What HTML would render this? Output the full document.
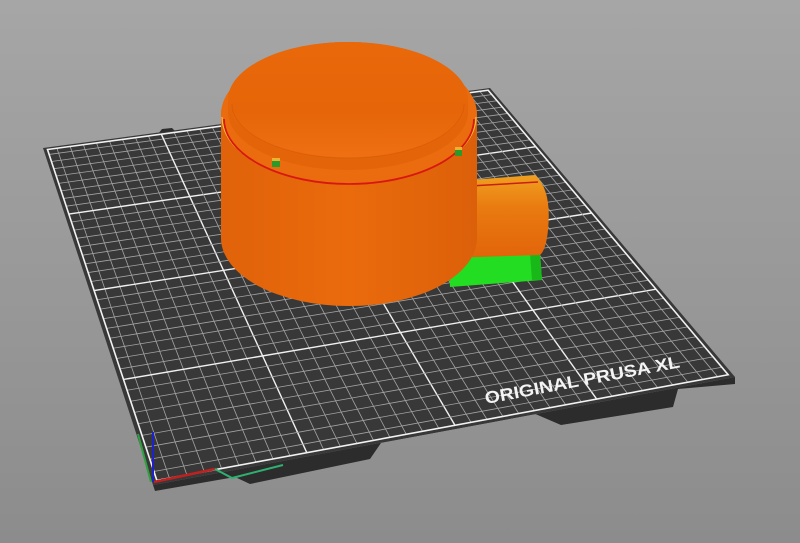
<!DOCTYPE html>
<html><head><meta charset="utf-8"><style>
html,body{margin:0;padding:0;width:800px;height:543px;overflow:hidden}
body{background:linear-gradient(#a6a6a6,#8c8c8c)}
svg{display:block}
</style></head><body>
<svg id="s" width="800" height="543" viewBox="0 0 800 543">
<defs>
<linearGradient id="cyl" x1="0" x2="1" y1="0" y2="0">
<stop offset="0" stop-color="#e0620a"/><stop offset="0.5" stop-color="#ea6b0c"/><stop offset="1" stop-color="#dc600a"/>
</linearGradient>
<linearGradient id="box" x1="0" x2="0" y1="0" y2="1">
<stop offset="0" stop-color="#f0a020"/><stop offset="0.4" stop-color="#e97a10"/><stop offset="1" stop-color="#e2640a"/>
</linearGradient>
<linearGradient id="top" x1="0" x2="0" y1="0" y2="1">
<stop offset="0" stop-color="#e8680a"/><stop offset="0.6" stop-color="#e56508"/><stop offset="1" stop-color="#ee7012"/>
</linearGradient>
</defs>
<polygon points="153,485 155,491 235,477 250,484 370,459 383,440 533,413 561,425 673,407 678,389 735,384 735,377" fill="#2c2c2c"/>
<polygon points="158,134 162,129 172,128 176,132" fill="#2c2c2c"/>
<polygon points="43,148 490,88 735,377 153,485" fill="#383838"/>
<g id="grid"></g>
<polygon id="border" fill="none" stroke="#f2f2f2" stroke-width="1.6"/>
<text x="0" y="0" transform="translate(486,404) rotate(-10.7)" fill="#f4f4f4" font-family="Liberation Sans, sans-serif" font-weight="bold" font-size="17" textLength="198" lengthAdjust="spacingAndGlyphs">ORIGINAL PRUSA XL</text>
<line x1="153" y1="482" x2="153" y2="432" stroke="#1e22c8" stroke-width="2"/>
<line x1="151" y1="482" x2="138" y2="434" stroke="#2fa040" stroke-width="2"/>
<line x1="154" y1="482" x2="215" y2="469" stroke="#c02020" stroke-width="2.5"/>
<polyline points="215,469 232,478 283,465" fill="none" stroke="#2fb070" stroke-width="2"/>
<!-- side box -->
<polygon points="448,257 540,253 542,280 450,287" fill="#22dd22"/>
<polygon points="530,254 540,253 542,280 532,280" fill="#18b818"/>
<path d="M440,200 Q445,182 470,180 L535,175 Q552,190 548,230 Q546,250 540,255 L448,258 Q438,240 440,200 Z" fill="url(#box)"/>
<line x1="470" y1="186" x2="538" y2="182" stroke="#c82010" stroke-width="1.5"/>
<!-- cylinder base -->
<path d="M221,115 L221,238 A128,68 0 0 0 477,238 L477,115 A128,68 0 0 0 221,115 Z" fill="url(#cyl)"/>
<ellipse cx="349" cy="115" rx="128" ry="68" fill="#ea6c0e"/>
<path d="M222,117 A127,67 0 0 0 476,117" fill="none" stroke="#f6c23a" stroke-width="1.2"/>
<path d="M224,119 A125,65 0 0 0 474,119" fill="none" stroke="#d81810" stroke-width="1.8"/>
<!-- upper cylinder -->
<path d="M228,100 L228,112 A120,58 0 0 0 468,112 L468,100 A120,58 0 0 0 228,100 Z" fill="#e4640a"/>
<ellipse cx="348" cy="100" rx="120" ry="58" fill="url(#top)"/>
<path d="M232,104 A116,54 0 0 0 464,104" fill="none" stroke="#d25a06" stroke-width="1" opacity="0.6"/>
<rect x="272" y="160" width="8" height="7" fill="#2a9a2a"/>
<rect x="272" y="158" width="8" height="3" fill="#f0b030"/>
<rect x="455" y="150" width="7" height="6" fill="#2a9a2a"/>
<rect x="455" y="147" width="7" height="3" fill="#f0b030"/>
</svg>
<script>
var X=[43,490,735,153],Y=[148,88,377,485];
var dx1=X[1]-X[2],dx2=X[3]-X[2],dx3=X[0]-X[1]+X[2]-X[3];
var dy1=Y[1]-Y[2],dy2=Y[3]-Y[2],dy3=Y[0]-Y[1]+Y[2]-Y[3];
var den=dx1*dy2-dx2*dy1;
var G=(dx3*dy2-dx2*dy3)/den,H=(dx1*dy3-dx3*dy1)/den;
var A=X[1]-X[0]+G*X[1],B=X[3]-X[0]+H*X[3],C=X[0],D=Y[1]-Y[0]+G*Y[1],E=Y[3]-Y[0]+H*Y[3],F=Y[0];
function P(u,v){var w=G*u+H*v+1;return [(A*u+B*v+C)/w,(D*u+E*v+F)/w];}
var h='',N=36;
for(var i=1;i<N;i++){var t=i/N;var maj=(i%9==0);
var st='" stroke="'+(maj?'#f0f0f0':'#a4a4a4')+'" stroke-width="'+(maj?1.4:0.8)+'"/>';
var a=P(t,0.008),b=P(t,0.992);h+='<line x1="'+a[0]+'" y1="'+a[1]+'" x2="'+b[0]+'" y2="'+b[1]+st;
a=P(0.008,t);b=P(0.992,t);h+='<line x1="'+a[0]+'" y1="'+a[1]+'" x2="'+b[0]+'" y2="'+b[1]+st;}
document.getElementById('grid').innerHTML=h;
var e=0.008,pts=[P(e,e),P(1-e,e),P(1-e,1-e),P(e,1-e)].map(function(p){return p.join(',')}).join(' ');
document.getElementById('border').setAttribute('points',pts);
</script>
</body></html>
